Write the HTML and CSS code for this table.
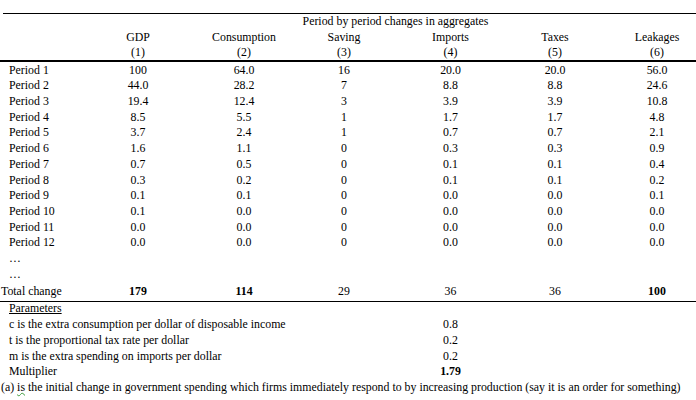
FILE: index.html
```html
<!DOCTYPE html>
<html>
<head>
<meta charset="utf-8">
<link rel="stylesheet" href="styles.css">
</head>
<body>
<div class="sheet">
  <div class="rule-top"></div>
  <div class="row head1"><div class="span-all">Period by period changes in aggregates</div></div>
  <div class="row head2">
    <div></div><div class="c">GDP</div><div class="c">Consumption</div><div class="c">Saving</div><div class="c">Imports</div><div class="c">Taxes</div><div class="c last">Leakages</div>
  </div>
  <div class="row head3">
    <div></div><div class="c">(1)</div><div class="c">(2)</div><div class="c">(3)</div><div class="c">(4)</div><div class="c">(5)</div><div class="c last">(6)</div>
  </div>
  <div class="rule-mid"></div>
  <div class="body">
    <div class="row"><div class="lbl">Period 1</div><div class="c">100</div><div class="c">64.0</div><div class="c">16</div><div class="c">20.0</div><div class="c">20.0</div><div class="c last">56.0</div></div>
    <div class="row"><div class="lbl">Period 2</div><div class="c">44.0</div><div class="c">28.2</div><div class="c">7</div><div class="c">8.8</div><div class="c">8.8</div><div class="c last">24.6</div></div>
    <div class="row"><div class="lbl">Period 3</div><div class="c">19.4</div><div class="c">12.4</div><div class="c">3</div><div class="c">3.9</div><div class="c">3.9</div><div class="c last">10.8</div></div>
    <div class="row"><div class="lbl">Period 4</div><div class="c">8.5</div><div class="c">5.5</div><div class="c">1</div><div class="c">1.7</div><div class="c">1.7</div><div class="c last">4.8</div></div>
    <div class="row"><div class="lbl">Period 5</div><div class="c">3.7</div><div class="c">2.4</div><div class="c">1</div><div class="c">0.7</div><div class="c">0.7</div><div class="c last">2.1</div></div>
    <div class="row"><div class="lbl">Period 6</div><div class="c">1.6</div><div class="c">1.1</div><div class="c">0</div><div class="c">0.3</div><div class="c">0.3</div><div class="c last">0.9</div></div>
    <div class="row"><div class="lbl">Period 7</div><div class="c">0.7</div><div class="c">0.5</div><div class="c">0</div><div class="c">0.1</div><div class="c">0.1</div><div class="c last">0.4</div></div>
    <div class="row"><div class="lbl">Period 8</div><div class="c">0.3</div><div class="c">0.2</div><div class="c">0</div><div class="c">0.1</div><div class="c">0.1</div><div class="c last">0.2</div></div>
    <div class="row"><div class="lbl">Period 9</div><div class="c">0.1</div><div class="c">0.1</div><div class="c">0</div><div class="c">0.0</div><div class="c">0.0</div><div class="c last">0.1</div></div>
    <div class="row"><div class="lbl">Period 10</div><div class="c">0.1</div><div class="c">0.0</div><div class="c">0</div><div class="c">0.0</div><div class="c">0.0</div><div class="c last">0.0</div></div>
    <div class="row"><div class="lbl">Period 11</div><div class="c">0.0</div><div class="c">0.0</div><div class="c">0</div><div class="c">0.0</div><div class="c">0.0</div><div class="c last">0.0</div></div>
    <div class="row"><div class="lbl">Period 12</div><div class="c">0.0</div><div class="c">0.0</div><div class="c">0</div><div class="c">0.0</div><div class="c">0.0</div><div class="c last">0.0</div></div>
    <div class="row"><div class="lbl">…</div></div>
    <div class="row"><div class="lbl">…</div></div>
    <div class="row total"><div class="lbl-flush">Total change</div><div class="c b">179</div><div class="c b">114</div><div class="c">29</div><div class="c">36</div><div class="c">36</div><div class="c last b">100</div></div>
    <div class="row prow"><div class="param"><span class="u">Parameters</span></div></div>
    <div class="row prow"><div class="param">c is the extra consumption per dollar of disposable income</div><div class="c val">0.8</div></div>
    <div class="row prow"><div class="param">t is the proportional tax rate per dollar</div><div class="c val">0.2</div></div>
    <div class="row prow"><div class="param">m is the extra spending on imports per dollar</div><div class="c val">0.2</div></div>
    <div class="row prow"><div class="param">Multiplier</div><div class="c val b">1.79</div></div>
    <div class="row prow"><div class="note">(a) <span class="squig">is</span> the initial change in government spending which firms immediately respond to by increasing production (say it is an order for something)</div></div>
  </div>
</div>
</body>
</html>
```

FILE: styles.css
```css
html, body {
  margin: 0;
  padding: 0;
  background: #ffffff;
}
body {
  font-family: "Liberation Serif", "Times New Roman", serif;
  font-size: 11.85px;
  color: #000000;
  width: 696px;
  height: 400px;
  overflow: hidden;
}
.sheet {
  padding-top: 13px;
}
.rule-top {
  margin-left: 3px;
  height: 1px;
  background: #000;
}
.rule-mid {
  height: 1.5px;
  background: #000;
  margin-bottom: 1px;
}
.row {
  display: grid;
  grid-template-columns: 85px 106px 106px 94px 119px 90px 96px;
  height: 15.72px;
  line-height: 15.72px;
  white-space: nowrap;
}
.head1 {
  height: 14px;
  line-height: 14px;
}
.head2 {
  height: 16px;
  line-height: 16px;
  margin-top: 1px;
}
.head3 {
  height: 15px;
  line-height: 15px;
}
.span-all {
  grid-column: 2 / -1;
  text-align: center;
  padding-left: 10px;
}
.c {
  text-align: center;
}
.last {
  padding-left: 18px;
}
.b {
  font-weight: bold;
}
.lbl {
  padding-left: 9px;
}
.lbl-flush {
  padding-left: 1px;
}
.total {
  box-sizing: border-box;
  height: 19px;
  padding-top: 1.5px;
  border-bottom: 1.5px solid #000;
  margin-bottom: -0.5px;
}
.prow {
  height: 15.85px;
  line-height: 15.85px;
}
.param {
  grid-column: 1 / 5;
  padding-left: 9px;
}
.val {
  grid-column: 5;
}
.u {
  text-decoration: underline;
}
.note {
  grid-column: 1 / -1;
  padding-left: 1px;
}
.squig {
  text-decoration-line: underline;
  text-decoration-style: wavy;
  text-decoration-color: #3c9a3c;
  text-decoration-thickness: 1px;
  text-underline-offset: 1px;
}
```
